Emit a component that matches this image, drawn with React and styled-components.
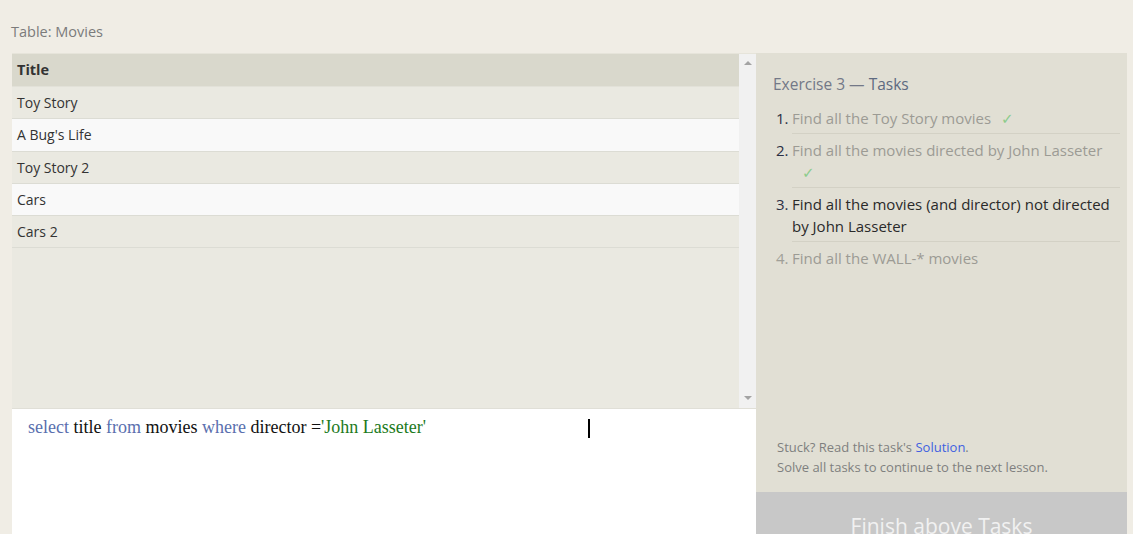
import React from "react";
import styled, { createGlobalStyle } from "styled-components";

const GlobalStyle = createGlobalStyle`
  html, body {
    margin: 0;
    padding: 0;
    overflow: hidden;
    background: #f0ede5;
  }
  body {
    font-family: "Open Sans", "Noto Sans", sans-serif;
  }
`;

const Page = styled.div`
  padding: 21px 0 0 12px;
`;

const Caption = styled.div`
  font-size: 14.5px;
  line-height: 22px;
  color: #7b7b7b;
  margin: 0 0 10px -1px;
`;

const Workspace = styled.div`
  display: flex;
  align-items: flex-start;
`;

const LeftColumn = styled.div`
  width: 744px;
  display: flex;
  flex-direction: column;
`;

const TableArea = styled.div`
  display: flex;
  height: 354px;
  background: #eae9e1;
  border-top: 1px solid #e6e4da;
  border-bottom: 1px solid #e0dfd7;
`;

const TableViewport = styled.div`
  flex: 1;
  overflow: hidden;
`;

const Scrollbar = styled.div`
  width: 17px;
  background: #f1f1f1;
  display: flex;
  flex-direction: column;
  justify-content: space-between;
  align-items: center;
  padding: 7px 0 8px;
  box-sizing: border-box;
`;

const Arrow = styled.span`
  width: 0;
  height: 0;
  border-left: 4px solid transparent;
  border-right: 4px solid transparent;
  ${(p) =>
    p.$down
      ? "border-top: 4px solid #a3a3a3;"
      : "border-bottom: 4px solid #a3a3a3;"}
`;

const HeaderRow = styled.div`
  height: 32px;
  line-height: 32px;
  padding-left: 5px;
  background: #d9d8cc;
  border-bottom: 1px solid #e2e1d8;
  font-size: 14.5px;
  font-weight: 700;
  color: #333;
`;

const Row = styled.div`
  height: 31.3px;
  line-height: 31px;
  padding-left: 5px;
  background: ${(p) => (p.$alt ? "#f9f9f9" : "#eae9e1")};
  border-bottom: 1px solid #dcdcd4;
  font-size: 14px;
  color: #333;
`;

const Editor = styled.div`
  position: relative;
  height: 160px;
  background: #ffffff;
  padding: 6px 16px;
  box-sizing: border-box;
  font-family: "Liberation Serif", "DejaVu Serif", serif;
  font-size: 18px;
  line-height: 24px;
  color: #111;
`;

const Keyword = styled.span`
  color: #5a6fae;
`;

const Str = styled.span`
  color: #1d7a1d;
`;

const Caret = styled.span`
  position: absolute;
  left: 576px;
  top: 10px;
  width: 2px;
  height: 19px;
  background: #000;
`;

const RightColumn = styled.div`
  width: 371px;
  display: flex;
  flex-direction: column;
`;

const TaskPanel = styled.div`
  height: 439px;
  background: #e1dfd4;
  display: flex;
  flex-direction: column;
  box-sizing: border-box;
  padding: 20px 0 15px 0;
`;

const PanelTitle = styled.div`
  font-size: 15.5px;
  line-height: 22px;
  color: #737887;
  padding-left: 17px;
  margin-bottom: 7px;
`;

const TitleStrong = styled.span`
  color: #5d6a80;
`;

const TaskList = styled.div`
  display: flex;
  flex-direction: column;
  padding-left: 20px;
  padding-right: 7px;
`;

const Task = styled.div`
  display: flex;
  font-size: 15px;
  line-height: 22px;
`;

const TaskNum = styled.span`
  width: 16px;
  flex: none;
  padding-top: 5px;
  color: ${(p) => (p.$muted ? "#a09f98" : "#2b2f44")};
`;

const TaskText = styled.span`
  flex: 1;
  padding: 5px 0 4px;
  border-bottom: ${(p) => (p.$last ? "none" : "1px solid #d3d1c5")};
  color: ${(p) => (p.$current ? "#2a2a2a" : "#9c9b94")};
`;

const Check = styled.span`
  display: inline-block;
  color: #8ccc8c;
  margin-left: 10px;
  font-family: "DejaVu Sans", sans-serif;
  font-size: 15px;
  line-height: 1;
`;

const Spacer = styled.div`
  flex: 1;
`;

const Help = styled.div`
  padding-left: 21px;
  font-size: 13px;
  line-height: 20px;
  color: #7f7f7f;
`;

const HelpLink = styled.a`
  color: #3f5fe0;
  text-decoration: none;
`;

const FinishButton = styled.div`
  height: 70px;
  background: #c8c8c8;
  color: #f1f1f1;
  font-size: 21px;
  text-align: center;
  padding-top: 20px;
  box-sizing: border-box;
`;

const movies = ["Toy Story", "A Bug's Life", "Toy Story 2", "Cars", "Cars 2"];

const tasks = [
  { text: "Find all the Toy Story movies", done: true },
  { text: "Find all the movies directed by John Lasseter", done: true },
  { text: "Find all the movies (and director) not directed by John Lasseter", current: true },
  { text: "Find all the WALL-* movies" },
];

export default function App() {
  return (
    <>
      <GlobalStyle />
      <Page>
        <Caption>Table: Movies</Caption>
        <Workspace>
          <LeftColumn>
            <TableArea>
              <TableViewport>
                <HeaderRow>Title</HeaderRow>
                {movies.map((m, i) => (
                  <Row key={m} $alt={i % 2 === 1}>
                    {m}
                  </Row>
                ))}
              </TableViewport>
              <Scrollbar>
                <Arrow />
                <Arrow $down />
              </Scrollbar>
            </TableArea>
            <Editor>
              <Keyword>select</Keyword> title <Keyword>from</Keyword> movies{" "}
              <Keyword>where</Keyword> director =<Str>'John Lasseter'</Str>
              <Caret />
            </Editor>
          </LeftColumn>
          <RightColumn>
            <TaskPanel>
              <PanelTitle>
                Exercise 3 — <TitleStrong>Tasks</TitleStrong>
              </PanelTitle>
              <TaskList>
                {tasks.map((t, i) => (
                  <Task key={i}>
                    <TaskNum $muted={!t.done && !t.current}>{i + 1}.</TaskNum>
                    <TaskText $current={t.current} $last={i === tasks.length - 1}>
                      {t.text}
                      {t.done && <Check>✓</Check>}
                    </TaskText>
                  </Task>
                ))}
              </TaskList>
              <Spacer />
              <Help>
                Stuck? Read this task's <HelpLink href="#">Solution</HelpLink>.
                <br />
                Solve all tasks to continue to the next lesson.
              </Help>
            </TaskPanel>
            <FinishButton>Finish above Tasks</FinishButton>
          </RightColumn>
        </Workspace>
      </Page>
    </>
  );
}
